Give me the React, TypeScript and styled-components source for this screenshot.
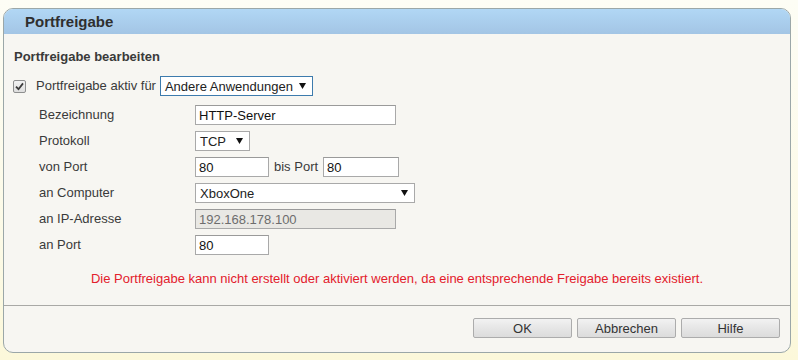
import React from 'react';
import styled, { createGlobalStyle } from 'styled-components';

const GlobalStyle = createGlobalStyle`
  html, body {
    margin: 0;
    padding: 0;
  }
  body {
    background: linear-gradient(180deg, #fdfdf5 0%, #fcfae6 70%, #fcf8da 100%);
    font-family: 'Liberation Sans', Arial, sans-serif;
    font-size: 13px;
    color: #3a3a3a;
    width: 798px;
    height: 360px;
    overflow: hidden;
  }
`;

const Panel = styled.div`
  margin: 8px 7px 0 3px;
  width: 788px;
  box-sizing: border-box;
  border: 1px solid #9ba7a8;
  border-radius: 10px;
  background: #f7f6f2;
  overflow: hidden;
`;

const PanelHeader = styled.div`
  height: 25px;
  box-sizing: border-box;
  padding-left: 21px;
  background: linear-gradient(180deg, #b1d7f5 0%, #a3c5e5 100%);
  display: flex;
  align-items: center;
`;

const PanelTitle = styled.h1`
  margin: 0;
  font-size: 15px;
  font-weight: bold;
  color: #2f2f2f;
  line-height: 18px;
`;

const PanelBody = styled.div`
  padding: 14px 10px 0 10px;
`;

const SubTitle = styled.h2`
  margin: 0;
  font-size: 13px;
  font-weight: bold;
  line-height: 18px;
  color: #3a3a3a;
`;

const CheckRow = styled.div`
  margin-top: 10px;
  height: 20px;
  display: flex;
  align-items: center;
`;

const CheckBox = styled.span`
  width: 11px;
  height: 11px;
  margin-left: -1px;
  border: 1px solid #8e8f8f;
  border-radius: 2px;
  background: linear-gradient(180deg, #f2f2f2 0%, #dedede 100%);
  display: flex;
  align-items: center;
  justify-content: center;
  margin-right: 10px;
`;

const CheckLabel = styled.span`
  line-height: 18px;
  margin-right: 4px;
`;

const SelectBox = styled.div<{ $width: number; $focused?: boolean }>`
  width: ${(p) => p.$width}px;
  height: 20px;
  box-sizing: border-box;
  border: 1px solid ${(p) => (p.$focused ? '#3d7bad' : '#a9a9a9')};
  background: #ffffff;
  display: flex;
  align-items: center;
  justify-content: space-between;
  gap: 6px;
  padding: 0 6px 0 4px;
  color: #222;
  white-space: nowrap;
`;

const FormGrid = styled.div`
  margin-top: 6px;
  padding-left: 25px;
  display: grid;
  grid-template-columns: 156px 1fr;
  grid-auto-rows: 26px;
  align-items: center;
`;

const FieldLabel = styled.span`
  line-height: 18px;
  color: #3a3a3a;
`;

const FieldCell = styled.div`
  display: flex;
  align-items: center;
`;

const TextInput = styled.input<{ $width: number; $disabled?: boolean }>`
  width: ${(p) => p.$width}px;
  height: 20px;
  box-sizing: border-box;
  border: 1px solid #a9a9a9;
  border-top-color: #9a9a9a;
  padding: 0 3px;
  margin: 0;
  font-family: 'Liberation Sans', Arial, sans-serif;
  font-size: 13px;
  color: ${(p) => (p.$disabled ? '#6d6d6d' : '#111')};
  background: ${(p) => (p.$disabled ? '#e9e8e4' : '#ffffff')};
  outline: none;
`;

const InlineText = styled.span`
  margin: 0 5px;
  line-height: 18px;
`;

const ErrorText = styled.p`
  margin: 12px 0 0 0;
  text-align: center;
  line-height: 18px;
  color: #e3202c;
`;

const Separator = styled.div`
  margin-top: 17px;
  height: 1px;
  background: #a9a9a6;
`;

const Footer = styled.div`
  display: flex;
  justify-content: flex-end;
  gap: 5px;
  padding: 12px 10px 14px 0;
`;

const Button = styled.button`
  width: 99px;
  height: 20px;
  box-sizing: border-box;
  border: 1px solid #acacac;
  border-radius: 2px;
  background: linear-gradient(180deg, #f2f2f2 0%, #e6e6e6 50%, #dcdcdc 100%);
  font-family: 'Liberation Sans', Arial, sans-serif;
  font-size: 13px;
  color: #333;
  padding: 0;
`;

const Arrow = () => (
  <svg width="7" height="6" viewBox="0 0 7 6">
    <path d="M0 0 L7 0 L3.5 6 Z" fill="#111" />
  </svg>
);

const Check = () => (
  <svg width="9" height="9" viewBox="0 0 9 9">
    <path d="M1 4.6 L3.5 7.2 L8 1.4" fill="none" stroke="#3b3b3b" strokeWidth="1.8" />
  </svg>
);

const App: React.FC = () => {
  return (
    <>
      <GlobalStyle />
      <Panel>
        <PanelHeader>
          <PanelTitle>Portfreigabe</PanelTitle>
        </PanelHeader>
        <PanelBody>
          <SubTitle>Portfreigabe bearbeiten</SubTitle>
          <CheckRow>
            <CheckBox>
              <Check />
            </CheckBox>
            <CheckLabel>Portfreigabe aktiv für</CheckLabel>
            <SelectBox $width={153} $focused>
              <span>Andere Anwendungen</span>
              <Arrow />
            </SelectBox>
          </CheckRow>

          <FormGrid>
            <FieldLabel>Bezeichnung</FieldLabel>
            <FieldCell>
              <TextInput $width={201} defaultValue="HTTP-Server" />
            </FieldCell>

            <FieldLabel>Protokoll</FieldLabel>
            <FieldCell>
              <SelectBox $width={55}>
                <span>TCP</span>
                <Arrow />
              </SelectBox>
            </FieldCell>

            <FieldLabel>von Port</FieldLabel>
            <FieldCell>
              <TextInput $width={74} defaultValue="80" />
              <InlineText>bis Port</InlineText>
              <TextInput $width={76} defaultValue="80" />
            </FieldCell>

            <FieldLabel>an Computer</FieldLabel>
            <FieldCell>
              <SelectBox $width={220}>
                <span>XboxOne</span>
                <Arrow />
              </SelectBox>
            </FieldCell>

            <FieldLabel>an IP-Adresse</FieldLabel>
            <FieldCell>
              <TextInput $width={201} $disabled readOnly defaultValue="192.168.178.100" />
            </FieldCell>

            <FieldLabel>an Port</FieldLabel>
            <FieldCell>
              <TextInput $width={74} defaultValue="80" />
            </FieldCell>
          </FormGrid>

          <ErrorText>
            Die Portfreigabe kann nicht erstellt oder aktiviert werden, da eine entsprechende Freigabe bereits existiert.
          </ErrorText>
        </PanelBody>
        <Separator />
        <Footer>
          <Button>OK</Button>
          <Button>Abbrechen</Button>
          <Button>Hilfe</Button>
        </Footer>
      </Panel>
    </>
  );
};

export default App;
